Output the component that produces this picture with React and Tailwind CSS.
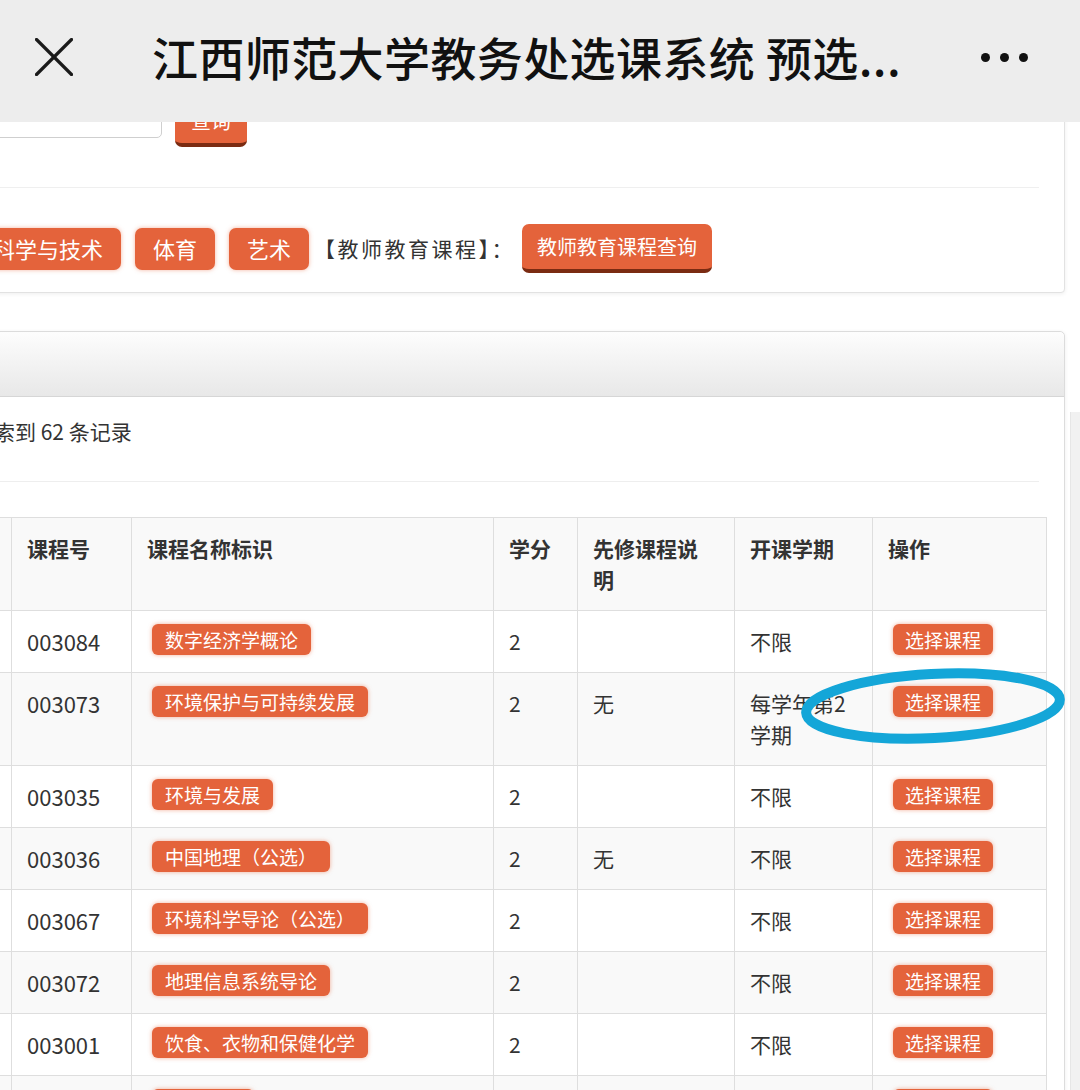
import React from 'react';

const rows = [
  { no: '003084', name: '数字经济学概论', credit: '2', pre: '', term: ['不限'] },
  { no: '003073', name: '环境保护与可持续发展', credit: '2', pre: '无', term: ['每学年第2', '学期'] },
  { no: '003035', name: '环境与发展', credit: '2', pre: '', term: ['不限'] },
  { no: '003036', name: '中国地理（公选）', credit: '2', pre: '无', term: ['不限'] },
  { no: '003067', name: '环境科学导论（公选）', credit: '2', pre: '', term: ['不限'] },
  { no: '003072', name: '地理信息系统导论', credit: '2', pre: '', term: ['不限'] },
  { no: '003001', name: '饮食、衣物和保健化学', credit: '2', pre: '', term: ['不限'] },
  { no: '003002', name: '生命科学', credit: '2', pre: '', term: ['不限'] },
];

const Tag = ({ children }) => (
  <span className="inline-block align-top -mt-[2px] ml-[5px] px-[13px] h-[31px] leading-[31px] text-[19px] text-white bg-[#e4633b] rounded-[6px] shadow-[0_0_4px_rgba(232,110,70,0.55)] whitespace-nowrap">
    {children}
  </span>
);

const CatButton = ({ children }) => (
  <span className="h-[42px] px-[18px] flex items-center text-[22px] text-white bg-[#e4633b] rounded-[7px] shadow-[0_0_4px_rgba(232,110,70,0.5)] whitespace-nowrap shrink-0">
    {children}
  </span>
);

const DarkButton = ({ children, className = '' }) => (
  <span className={`h-[49px] px-[15px] flex items-center text-[20px] text-white bg-[#e4633b] rounded-[7px] border-b-4 border-[#7a2b12] whitespace-nowrap shrink-0 ${className}`}>
    {children}
  </span>
);

const th = 'text-left align-top font-bold px-[15px] py-[15px] leading-[31px] border border-[#dedede]';
const td = 'text-left align-top px-[15px] py-[15px] leading-[31px] border border-[#dedede]';

const App = () => {
  return (
    <div className="relative w-[1080px] h-[1090px] overflow-hidden bg-white text-[#333] font-['Noto_Sans_CJK_SC','Noto_Sans',sans-serif]">
      {/* top bar */}
      <div className="relative z-10 h-[122px] bg-[#ededed] flex items-center pb-[8px]">
        <svg className="ml-[35px] w-[38px] h-[38px] shrink-0" viewBox="0 0 38 38">
          <line x1="1.5" y1="1.5" x2="36.5" y2="36.5" stroke="#1a1a1a" strokeWidth="3.2" strokeLinecap="round" />
          <line x1="36.5" y1="1.5" x2="1.5" y2="36.5" stroke="#1a1a1a" strokeWidth="3.2" strokeLinecap="round" />
        </svg>
        <div className="ml-[79px] text-[46px] leading-[50px] tracking-[0.4px] font-medium text-[#111] whitespace-nowrap -mt-[2px]">
          江西师范大学教务处选课系统 预选...
        </div>
        <div className="ml-auto mr-[52px] flex items-center gap-[10px]">
          <span className="w-[9px] h-[9px] rounded-full bg-[#111]" />
          <span className="w-[9px] h-[9px] rounded-full bg-[#111]" />
          <span className="w-[9px] h-[9px] rounded-full bg-[#111]" />
        </div>
      </div>

      {/* scrolled page content */}
      <div className="relative h-[968px] overflow-hidden">
        <div className="-mt-[42px] flex flex-col">
          {/* search / category card */}
          <div className="-ml-[180px] w-[1245px] bg-white border border-[#e2e2e2] rounded-[4px] shadow-[0_1px_4px_rgba(0,0,0,0.07)] px-[25px] pt-[17px] pb-[19px]">
            <div className="flex items-start">
              <div className="w-[316px] h-[40px] border border-[#cfcfcf] rounded-[5px] bg-white" />
              <DarkButton className="ml-[13px] px-[16px]">查询</DarkButton>
            </div>
            <div className="mt-[40px] border-t border-[#efefef]" />
            <div className="pt-[36px] flex items-center h-[85px]">
              <div className="-ml-[9px] flex items-center gap-[14px]">
                <CatButton>社会科学</CatButton>
                <CatButton>科学与技术</CatButton>
                <CatButton>体育</CatButton>
                <CatButton>艺术</CatButton>
              </div>
              <span className="ml-[5px] text-[21px] tracking-[2.5px] text-[#333] whitespace-nowrap">【教师教育课程】：</span>
              <DarkButton className="ml-[7px]">教师教育课程查询</DarkButton>
            </div>
          </div>

          {/* results card */}
          <div className="mt-[38px] -ml-[69px] w-[1134px] bg-white border border-[#dcdcdc] rounded-t-[5px] shadow-[0_1px_4px_rgba(0,0,0,0.07)]">
            <div className="h-[65px] bg-gradient-to-b from-[#fdfdfd] to-[#e8e8e8] border-b border-[#d6d6d6] rounded-t-[5px]" />
            <div className="px-[20px] pt-[19px]">
              <div className="text-[21px] leading-[30px] whitespace-nowrap">共检索到 62 条记录</div>
              <div className="mt-[35px] mr-[5px] border-t border-[#eeeeee]" />
              <table className="mt-[35px] w-[1094px] table-fixed border-collapse text-[21px]">
                <colgroup>
                  <col className="w-[59px]" />
                  <col className="w-[120px]" />
                  <col className="w-[362px]" />
                  <col className="w-[84px]" />
                  <col className="w-[157px]" />
                  <col className="w-[138px]" />
                  <col className="w-[174px]" />
                </colgroup>
                <thead>
                  <tr className="bg-[#f9f9f9]">
                    <th className={th}></th>
                    <th className={th}>课程号</th>
                    <th className={th}>课程名称标识</th>
                    <th className={th}>学分</th>
                    <th className={`${th} whitespace-nowrap`}>先修课程说<br />明</th>
                    <th className={th}>开课学期</th>
                    <th className={th}>操作</th>
                  </tr>
                </thead>
                <tbody>
                  {rows.map((r, i) => (
                    <tr key={r.no} className={i % 2 === 1 ? 'bg-[#f9f9f9]' : 'bg-white'}>
                      <td className={td}></td>
                      <td className={`${td} text-[22px]`}>{r.no}</td>
                      <td className={td}><Tag>{r.name}</Tag></td>
                      <td className={td}>{r.credit}</td>
                      <td className={td}>{r.pre}</td>
                      <td className={`${td} whitespace-nowrap`}>
                        {r.term.map((t, k) => (
                          <div key={k}>{t}</div>
                        ))}
                      </td>
                      <td className={td}>
                        <span className="inline-block align-top -mt-[2px] ml-[5px] px-[12px] h-[31px] leading-[31px] text-[19px] text-white bg-[#e4633b] rounded-[6px] shadow-[0_0_4px_rgba(232,110,70,0.55)] whitespace-nowrap">
                          选择课程
                        </span>
                      </td>
                    </tr>
                  ))}
                </tbody>
              </table>
            </div>
          </div>
        </div>

        {/* page scrollbar track */}
        <div className="absolute right-0 top-[290px] bottom-0 w-[10px] bg-[#f1f1f1] border-l border-[#e6e6e6]" />
      </div>

      {/* hand-drawn annotation */}
      <svg className="absolute left-[795px] top-[660px] w-[285px] h-[92px] pointer-events-none" viewBox="0 0 285 92">
        <ellipse cx="138" cy="46" rx="127" ry="32" fill="none" stroke="#14a6d8" strokeWidth="10" transform="rotate(-3 138 46)" />
      </svg>
    </div>
  );
};

export default App;
